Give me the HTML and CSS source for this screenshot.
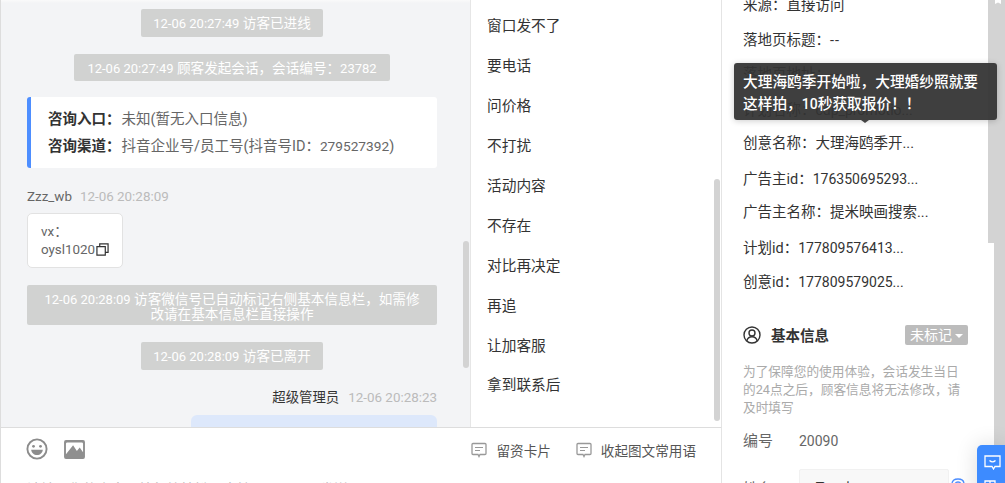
FILE: index.html
```html
<!DOCTYPE html>
<html lang="zh-CN">
<head>
<meta charset="utf-8">
<title>会话</title>
<link rel="stylesheet" href="styles.css">
</head>
<body>
<div class="app">
  <main class="workspace">
    <div class="upper">
      <section class="chat">
        <div class="sys sys-short"><span class="stamp">12-06 20:27:49</span> 访客已进线</div>
        <div class="sys sys-mid"><span class="stamp">12-06 20:27:49</span> 顾客发起会话，会话编号：<span class="stamp">23782</span></div>
        <div class="entry">
          <p><b>咨询入口：</b>未知(暂无入口信息)</p>
          <p><b>咨询渠道：</b>抖音企业号/员工号(抖音号ID：<span class="num">279527392</span>)</p>
        </div>
        <div class="meta"><span class="who">Zzz_wb</span><span class="when">12-06 20:28:09</span></div>
        <div class="bubble">vx：<br>oysl1020<svg class="copy" viewBox="0 0 14 14" width="13" height="13"><path d="M1 4h9v9H1zM4 4V1h9v9h-3" fill="none" stroke="#333" stroke-width="1.3"/></svg></div>
        <div class="sys sys-wide"><span class="stamp">12-06 20:28:09</span> 访客微信号已自动标记右侧基本信息栏，如需修改请在基本信息栏直接操作</div>
        <div class="sys sys-short sys-left"><span class="stamp">12-06 20:28:09</span> 访客已离开</div>
        <div class="meta meta-right"><span class="who who-dark">超级管理员</span><span class="when">12-06 20:28:23</span></div>
        <div class="mine"></div>
        <span class="bar chat-bar"></span>
      </section>
      <nav class="phrases">
        <a>窗口发不了</a>
        <a>要电话</a>
        <a>问价格</a>
        <a>不打扰</a>
        <a>活动内容</a>
        <a>不存在</a>
        <a>对比再决定</a>
        <a>再追</a>
        <a>让加客服</a>
        <a>拿到联系后</a>
        <span class="bar phrase-bar"></span>
      </nav>
    </div>
    <footer class="composer">
      <div class="tools">
        <svg class="tool" viewBox="0 0 22 22" width="22" height="22"><circle cx="11" cy="11" r="9.6" fill="none" stroke="#8c8c8c" stroke-width="1.9"/><circle cx="7.5" cy="8.3" r="1.4" fill="#8c8c8c"/><circle cx="14.5" cy="8.3" r="1.4" fill="#8c8c8c"/><path d="M5.2 11.8h11.6c-.3 3.2-2.7 5.3-5.8 5.3s-5.5-2.1-5.8-5.3z" fill="#8c8c8c"/></svg>
        <svg class="tool" viewBox="0 0 22 20" width="21" height="19"><rect width="22" height="20" rx="2" fill="#8f8f8f"/><path d="M2 15V4q0-1.500 1.500-1.500h15Q20 2.500 20 4v9l-3.500-5-3 3.500L9.500 5.500z" fill="#fff"/></svg>
        <div class="actions">
          <span class="action"><svg viewBox="0 0 16 16" width="16" height="16"><path d="M2 1.500h12q1 0 1 1v9q0 1-1 1H9l-1 2-1-2H2q-1 0-1-1v-9q0-1 1-1z" fill="none" stroke="#999" stroke-width="1.300"/><path d="M4 5.500h8M4 8.500h5" stroke="#999" stroke-width="1.200"/></svg>留资卡片</span>
          <span class="action"><svg viewBox="0 0 16 16" width="16" height="16"><path d="M2 1.500h12q1 0 1 1v9q0 1-1 1H9l-1 2-1-2H2q-1 0-1-1v-9q0-1 1-1z" fill="none" stroke="#999" stroke-width="1.300"/><path d="M4 5.500h8M4 8.500h5" stroke="#999" stroke-width="1.200"/></svg>收起图文常用语</span>
        </div>
      </div>
      <div class="placeholder">请输入你的内容，按行快捷键，支持 Ctrl+Enter 发送</div>
    </footer>
  </main>
  <aside class="side">
    <div class="side-content">
      <p class="field">来源：直接访问</p>
      <p class="field">落地页标题：<span class="dash">--</span></p>
      <p class="field">落地页地址：<span class="dash">--</span></p>
      <p class="field">计划名称：<span class="num">cdp_promotio...</span></p>
      <p class="field">创意名称：大理海鸥季开...</p>
      <p class="field">广告主id：<span class="num">176350695293...</span></p>
      <p class="field">广告主名称：提米映画搜索...</p>
      <p class="field">计划id：<span class="num">177809576413...</span></p>
      <p class="field">创意id：<span class="num">177809579025...</span></p>
      <div class="basic-head">
        <svg viewBox="0 0 18 18" width="18" height="18"><circle cx="9" cy="9" r="8" fill="none" stroke="#333" stroke-width="1.400"/><circle cx="9" cy="7" r="3" fill="none" stroke="#333" stroke-width="1.400"/><path d="M3.800 15c.6-2.800 2.600-4.200 5.200-4.200s4.600 1.400 5.200 4.200" fill="none" stroke="#333" stroke-width="1.400"/></svg>
        <h2>基本信息</h2>
        <span class="tag">未标记<i class="caret"></i></span>
      </div>
      <p class="hint">为了保障您的使用体验，会话发生当日的24点之后，顾客信息将无法修改，请及时填写</p>
      <div class="row"><span class="label">编号</span><span>20090</span></div>
      <div class="row row-name">
        <span class="label">姓名</span>
        <span class="input">孟一人</span>
        <svg viewBox="0 0 14 14" width="14" height="14"><path d="M1 13V6q0-5 6-5t6 5v7M4 13V7q0-3 3-3t3 3v6" fill="none" stroke="#4d8eff" stroke-width="1.300"/></svg>
      </div>
    </div>
    <div class="rail"><svg class="rail-mark" viewBox="0 0 6 4" width="6" height="4"><path d="M0 0h6v4L3 2.500 0 4z" fill="#fff"/></svg></div>
    <span class="side-thumb"></span>
  </aside>
  <div class="tooltip">大理海鸥季开始啦，大理婚纱照就要这样拍，<span class="num">10</span>秒获取报价！！</div>
  <div class="dock">
    <svg viewBox="0 0 17 15" width="17" height="15"><path d="M1 1h15v10.500h-5l-1.500 2.500-1.500-2.500H1z" fill="none" stroke="#fff" stroke-width="1.300"/><path d="M5.500 5.500c1.800 1.600 4.200 1.600 6 0" fill="none" stroke="#fff" stroke-width="1.300"/></svg>
    <svg viewBox="0 0 12 12" width="12" height="12"><path d="M1 1h10v10H1zM6 1v10M1 6h10" fill="none" stroke="#fff" stroke-width="1.300"/></svg>
  </div>
</div>
</body>
</html>
```
FILE: styles.css
```css
* { box-sizing: border-box; }
html, body { margin: 0; height: 100%; overflow: hidden; }
body {
  font-family: Roboto, "Noto Sans CJK SC", sans-serif;
  font-size: 14px;
  font-weight: 400;
  color: #333;
  background: #fff;
}
p { margin: 0; }
.num { font-size: 14px; }
.stamp { font-size: 13px; }
.app { position: relative; display: flex; height: 100vh; overflow: hidden; }
.workspace { width: 722px; flex: none; display: flex; flex-direction: column; }

.upper { display: flex; height: 427px; flex: none; }
.chat {
  position: relative;
  width: 470px;
  flex: none;
  display: flex;
  flex-direction: column;
  padding: 9px 33px 0 26px;
  background: linear-gradient(#fafafa, #f3f4f6 3px);
  border-left: 1px solid #ddd;
  overflow: hidden;
}
.chat > * { flex: none; }
.sys {
  align-self: center;
  padding: 0 12.500px;
  border-radius: 2px;
  background: #d1d2d1;
  color: #fff;
  font-size: 13.600px;
  text-align: center;
  line-height: 29px;
  height: 28px;
  white-space: nowrap;
}
.sys-mid { margin-top: 17px; height: 27px; padding: 0 13px; }
.sys-left { margin-top: 17px; }
.sys-wide {
  align-self: stretch;
  margin-top: 17px;
  height: 40px;
  padding: 7px 15px 0;
  line-height: 14px;
  white-space: normal;
}
.entry {
  margin-top: 16px;
  height: 71px;
  padding: 9px 0 0 17px;
  background: #fff;
  border-left: 4px solid #4d8eff;
  border-radius: 3px;
  color: #666;
  font-size: 14.500px;
  white-space: nowrap;
}
.entry p { line-height: 27px; }
.entry b { color: #333; font-weight: 700; margin-right: 1px; }
.entry .num { font-size: 13.700px; }
.meta { margin-top: 21px; line-height: 16px; display: flex; gap: 8px; height: 16px; font-size: 13.400px; }
.who { color: #666; }
.who-dark { color: #333; }
.when { color: #bbb; }
.meta-right { justify-content: flex-end; margin-top: 20px; gap: 9px; }
.bubble {
  align-self: flex-start;
  width: 96px;
  height: 55px;
  margin-top: 8px;
  padding: 9px 13px;
  background: #fff;
  border: 1px solid #e2e2e2;
  border-radius: 5px;
  font-size: 13.400px;
  line-height: 18px;
  color: #666;
  white-space: nowrap;
}
.copy { vertical-align: -2px; margin-left: 1px; }
.bubble + .sys { margin-top: 17px; }
.mine { margin: 9px 0 0 auto; width: 246px; height: 40px; background: #dde8fb; border-radius: 6px 6px 0 0; }
.bar { position: absolute; width: 6px; background: #d3d3d3; border-radius: 3px; }
.chat-bar { left: 462px; top: 241px; height: 127px; }

.phrases {
  position: relative;
  flex: 1;
  display: flex;
  flex-direction: column;
  padding: 7.400px 0 0 16px;
  background: #fff;
  border-left: 1px solid #e6e6e6;
  border-right: 1px solid #e4e4e4;
}
.phrases a { height: 39.900px; line-height: 39.900px; color: #333; font-size: 14.700px; }
.phrase-bar { right: 1px; top: 179px; height: 242px; }

.composer { flex: 1; min-height: 0; border-top: 2px solid #ddd; border-left: 1px solid #ddd; border-right: 1px solid #e4e4e4; margin-top: -1px; background: #fff; padding: 10px 0 0 25px; }
.tools { display: flex; align-items: center; gap: 16px; height: 22px; }
.tool { display: block; }
.actions { margin-left: auto; margin-right: 25px; display: flex; gap: 25px; }
.action { display: flex; align-items: center; gap: 9px; color: #555; margin-top: 2px; font-size: 13.600px; }
.placeholder { margin-top: 19px; margin-left: 1px; color: #bbb; line-height: 20px; }

.side { position: relative; flex: 1; display: flex; min-width: 0; }
.side-content { flex: 1; min-width: 0; padding: 0 27px 0 21px; margin-top: -8px; }
.field { height: 34.500px; line-height: 28px; white-space: nowrap; color: #333; font-size: 14.500px; }
.dash { letter-spacing: 1px; }
.rail { position: relative; width: 11px; flex: none; background: #d3d3d3; }
.rail-mark { position: absolute; left: 1px; top: 0; }
.side-thumb { position: absolute; right: 11px; top: 0; width: 6px; height: 243px; background: #d3d3d3; }
.basic-head { display: flex; align-items: center; margin-top: 22px; height: 20px; }
.basic-head h2 { margin: 0 0 0 10px; font-size: 14.500px; font-weight: 700; color: #333; }
.tag {
  margin-left: auto;
  margin-right: -1px;
  width: 63px;
  height: 20px;
  padding-left: 5px;
  line-height: 20px;
  background: #bcbcbc;
  border-radius: 2px;
  color: #fff;
  white-space: nowrap;
}
.caret { display: inline-block; margin-left: 3px; vertical-align: 2px; border: 4px solid transparent; border-top: 4px solid #fff; border-bottom: 0; }
.hint { margin-top: 18px; font-size: 12.700px; line-height: 18px; color: #aaa; }
.row { display: flex; margin-top: 14px; line-height: 20px; color: #666; }
.label { width: 56px; flex: none; font-size: 15px; }
.row-name { align-items: flex-start; margin-top: 18px; }
.input { width: 150px; height: 32px; padding: 8px 8px 0 13px; background: #f8f8f8; border: 1px solid #f1f1f1; border-radius: 2px; color: #333; }
.row-name .label { margin-top: 10px; }
.row-name svg { margin: 9px 0 0 2px; flex: none; }

.tooltip {
  position: absolute;
  left: 734px;
  top: 63px;
  width: 263px;
  height: 57px;
  padding: 8px 10px 6px 9px;
  background: rgba(51, 51, 51, .94);
  border-radius: 3px;
  color: #fff;
  font-size: 14.700px;
  font-weight: 500;
  line-height: 22px;
  box-shadow: 0 1px 6px rgba(0, 0, 0, .2);
}
.tooltip::after {
  content: "";
  position: absolute;
  left: 127px;
  bottom: -3px;
  border: 4px solid transparent;
  border-top: 3px solid #444;
  border-bottom: 0;
}
.dock {
  position: absolute;
  left: 977px;
  top: 445px;
  width: 28px;
  height: 60px;
  padding: 10px 0 0 7px;
  display: flex;
  flex-direction: column;
  gap: 10px;
  background: #3d8bff;
  border-radius: 5px 0 0 0;
  box-shadow: 0 0 22px rgba(0, 0, 0, .14);
}
.dock svg { flex: none; }
```
